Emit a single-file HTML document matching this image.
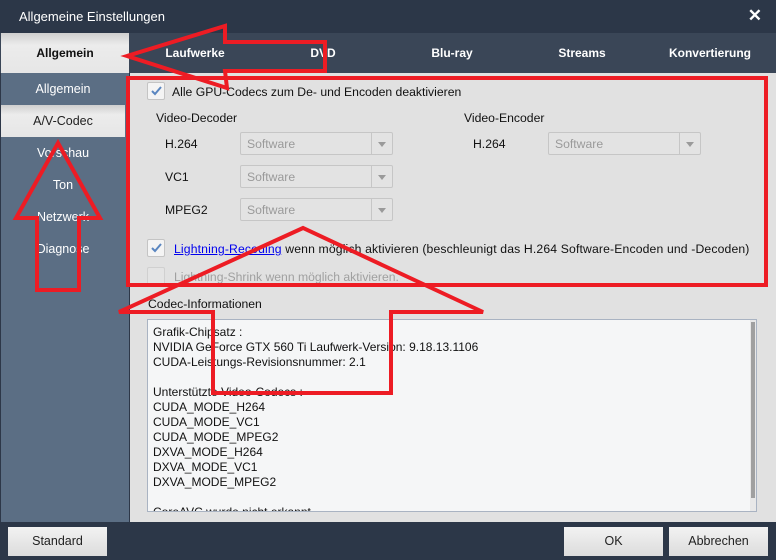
<!DOCTYPE html>
<html><head><meta charset="utf-8"><style>
*{margin:0;padding:0;box-sizing:border-box}
body{width:776px;height:560px;overflow:hidden;position:relative;font-family:"Liberation Sans",Arial,sans-serif;font-size:12.2px;background:#2d3748;color:#111}
.abs{position:absolute}
.title{left:0;top:0;width:776px;height:33px;background:#2c3748;color:#fff;font-size:13px;padding:9px 0 0 19px}
.x{right:14px;top:6px;color:#fff;font-weight:bold;font-size:17px}
.tabs{left:0;top:33px;width:776px;height:40px;background:#3a4657}
.tab{top:33px;height:40px;line-height:41px;color:#fff;font-weight:bold;text-align:center;font-size:12px}
.tabsel{left:1px;top:33px;width:128px;height:40px;background:linear-gradient(#cfcfcf,#ececec 30%,#e6e6e6);color:#111;font-weight:bold;text-align:center;line-height:41px;font-size:12px}
.side{left:1px;top:73px;width:128px;height:449px;background:#5b6e84}
.si{left:1px;width:124px;height:32px;line-height:32px;text-align:center;color:#fff;font-size:12.5px}
.ssel{background:linear-gradient(#cfcfcf,#ececec 30%,#e6e6e6);color:#222}
.content{left:130px;top:73px;width:646px;height:449px;background:#e1e1e1}
.cb{width:18px;height:18px;border:1px solid #c4c4c4;background:#f4f4f4;border-radius:2px}
.cb svg{position:absolute;left:2px;top:2px}
.sel{width:153px;height:23px;border:1px solid #c6c6c6;background:#e3e3e3;color:#9a9a9a;padding:4px 0 0 6px;border-radius:2px}
.sel:after{content:"";position:absolute;right:0;top:0;width:20px;height:21px;border-left:1px solid #c6c6c6}
.sel i{position:absolute;right:6px;top:9px;border-left:4px solid transparent;border-right:4px solid transparent;border-top:5px solid #9a9a9a}
.ta{left:147px;top:319px;width:610px;height:193px;border:1px solid #a9b3c2;background:#f5f6f7;overflow:hidden;padding:5px 0 0 5px;line-height:15px;font-size:12px}
.sb{right:0;top:0;width:6px;height:191px;background:#e8e8e8}
.sb b{position:absolute;left:1px;top:2px;width:4px;height:176px;background:#a0a0a0}
.btn{top:527px;height:29px;background:linear-gradient(#f2f2f2,#dcdcdc);color:#222;text-align:center;line-height:29px;font-size:12.5px}
.bot{left:0;top:522px;width:776px;height:38px;background:#2c3748}
</style></head><body>
<div class="abs title">Allgemeine Einstellungen</div>
<div class="abs x">✕</div>
<div class="abs tabs"></div>
<div class="abs tabsel">Allgemein</div>
<div class="abs tab" style="left:150px;width:90px">Laufwerke</div>
<div class="abs tab" style="left:293px;width:60px">DVD</div>
<div class="abs tab" style="left:417px;width:70px">Blu-ray</div>
<div class="abs tab" style="left:542px;width:80px">Streams</div>
<div class="abs tab" style="left:660px;width:100px">Konvertierung</div>
<div class="abs side"></div>
<div class="abs si" style="top:73px">Allgemein</div>
<div class="abs si ssel" style="top:105px">A/V-Codec</div>
<div class="abs si" style="top:137px">Vorschau</div>
<div class="abs si" style="top:169px">Ton</div>
<div class="abs si" style="top:201px">Netzwerk</div>
<div class="abs si" style="top:233px">Diagnose</div>
<div class="abs content"></div>

<div class="abs cb" style="left:147px;top:82px"><svg width="13" height="12"><path d="M2 6 L5 9 L11 2" stroke="#5a86c0" stroke-width="2" fill="none"/></svg></div>
<div class="abs" style="left:172px;top:85px">Alle GPU-Codecs zum De- und Encoden deaktivieren</div>
<div class="abs" style="left:156px;top:111px">Video-Decoder</div>
<div class="abs" style="left:464px;top:111px">Video-Encoder</div>
<div class="abs" style="left:165px;top:137px">H.264</div>
<div class="abs sel" style="left:240px;top:132px">Software<i></i></div>
<div class="abs" style="left:165px;top:170px">VC1</div>
<div class="abs sel" style="left:240px;top:165px">Software<i></i></div>
<div class="abs" style="left:165px;top:203px">MPEG2</div>
<div class="abs sel" style="left:240px;top:198px">Software<i></i></div>
<div class="abs" style="left:473px;top:137px">H.264</div>
<div class="abs sel" style="left:548px;top:132px">Software<i></i></div>
<div class="abs cb" style="left:147px;top:239px"><svg width="13" height="12"><path d="M2 6 L5 9 L11 2" stroke="#5a86c0" stroke-width="2" fill="none"/></svg></div>
<div class="abs" style="left:174px;top:242px;letter-spacing:0.15px"><span style="color:#0000ee;text-decoration:underline">Lightning-Recoding</span> wenn möglich aktivieren (beschleunigt das H.264 Software-Encoden und -Decoden)</div>
<div class="abs cb" style="left:147px;top:267px;background:#e4e4e4;border-color:#d0d0d0"></div>
<div class="abs" style="left:174px;top:270px;color:#a0a0a0">Lightning-Shrink wenn möglich aktivieren.</div>
<div class="abs" style="left:148px;top:297px">Codec-Informationen</div>
<div class="abs ta">Grafik-Chipsatz :<br>NVIDIA GeForce GTX 560 Ti Laufwerk-Version: 9.18.13.1106<br>CUDA-Leistungs-Revisionsnummer: 2.1<br><br>Unterstützte Video-Codecs :<br>CUDA_MODE_H264<br>CUDA_MODE_VC1<br>CUDA_MODE_MPEG2<br>DXVA_MODE_H264<br>DXVA_MODE_VC1<br>DXVA_MODE_MPEG2<br><br>CoreAVC wurde nicht erkannt
<div class="abs sb"><b></b></div></div>
<div class="abs bot"></div>
<div class="abs btn" style="left:8px;width:99px">Standard</div>
<div class="abs btn" style="left:564px;width:99px">OK</div>
<div class="abs btn" style="left:669px;width:99px">Abbrechen</div>

<svg class="abs" style="left:0;top:0" width="776" height="560">
<g fill="none" stroke="#ed1c24" stroke-width="4" stroke-linejoin="miter">
<rect x="128" y="78" width="638" height="207"/>
<path d="M127 56 L225 26 L225 42 L325 42 L325 71 L225 71 L227 88 Z"/>
<path d="M58 143 L16 218 L37 218 L37 290 L79 290 L79 218 L100 218 Z"/>
<path d="M303 228 L119 312 L213 312 L213 393 L391 393 L391 312 L483 312 Z"/>
</g></svg>
</body></html>
